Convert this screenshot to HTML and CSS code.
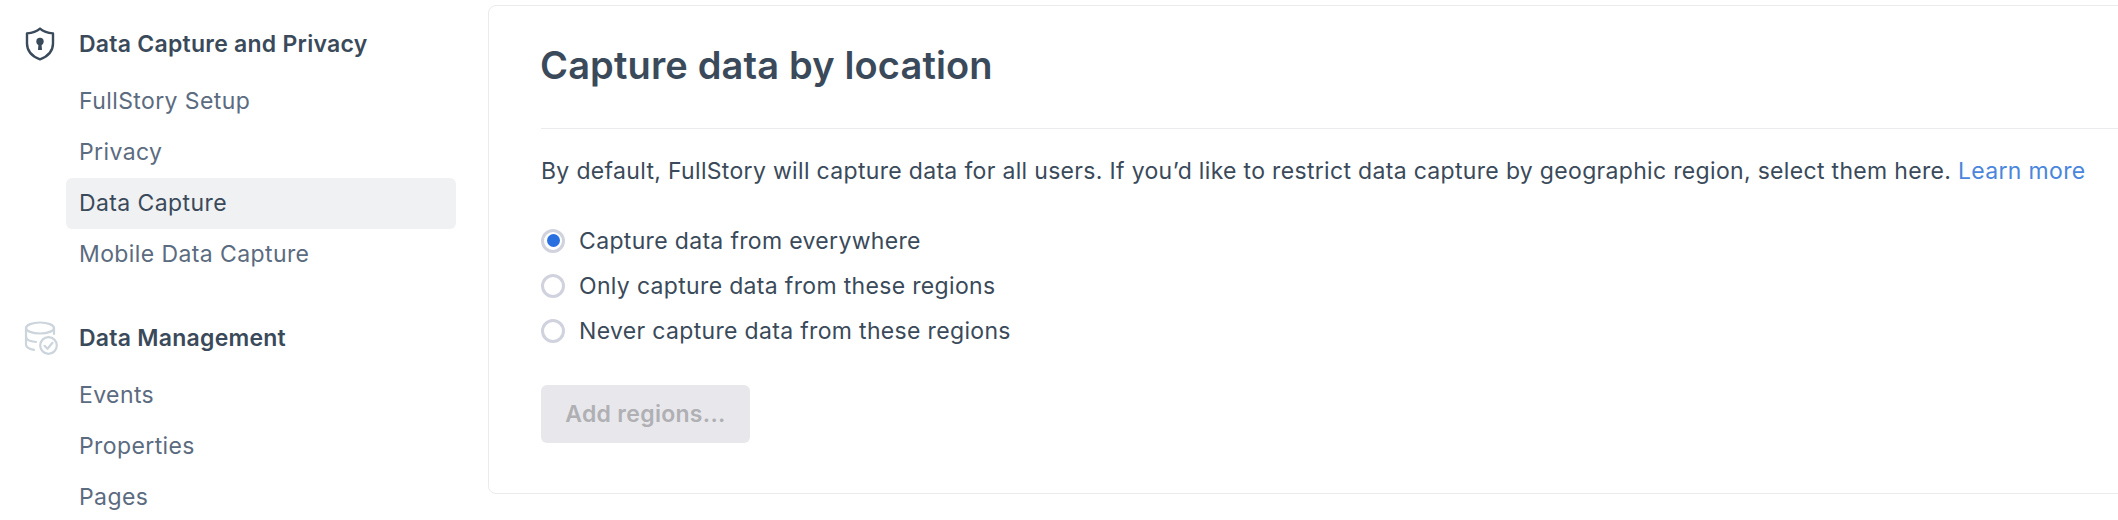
FILE: index.html
```html
<!DOCTYPE html>
<html lang="en">
<head>
<meta charset="utf-8">
<title>Capture data by location</title>
<link rel="stylesheet" href="styles.css">
</head>
<body>
<div class="page">
  <nav class="sidebar">
    <div class="group">
      <div class="group-head">
        <svg class="group-icon" width="30" height="34" viewBox="0 0 30 34" fill="none">
          <path d="M15 1.6 C18.5 4.6 23 6 28 6.4 V16.5 C28 24 22.5 29.5 15 32.4 C7.500 29.500 2 24 2 16.500 V6.400 C7 6 11.500 4.600 15 1.600 Z" stroke="#3a4a5a" stroke-width="2.400" stroke-linejoin="round"/>
          <circle cx="15" cy="14.500" r="3.700" fill="#3a4a5a"/>
          <path d="M13.600 15 H16.400 L17 23 H13 Z" fill="#3a4a5a"/>
        </svg>
        <span class="group-title">Data Capture and Privacy</span>
      </div>
      <a class="item">FullStory Setup</a>
      <a class="item">Privacy</a>
      <a class="item active">Data Capture</a>
      <a class="item">Mobile Data Capture</a>
    </div>
    <div class="group">
      <div class="group-head">
        <svg class="group-icon" width="34" height="34" viewBox="0 0 34 34" fill="none" stroke="#ccd5dc" stroke-width="2.200" stroke-linecap="round" stroke-linejoin="round">
          <ellipse cx="16" cy="7" rx="14" ry="5.500"/>
          <path d="M2 7 V23.500 C2 26 5 28 10 28.800"/>
          <path d="M2 15.500 C2 18.500 6 20.500 12 21"/>
          <path d="M30 7 V13"/>
          <circle cx="24.500" cy="24.500" r="8.300"/>
          <path d="M20.500 24.800 L23.500 27.800 L28.500 21.800"/>
        </svg>
        <span class="group-title">Data Management</span>
      </div>
      <a class="item">Events</a>
      <a class="item">Properties</a>
      <a class="item">Pages</a>
    </div>
  </nav>
  <main class="card">
    <h1 class="title">Capture data by location</h1>
    <div class="body">
      <p class="intro">By default, FullStory will capture data for all users. If you’d like to restrict data capture by geographic region, select them here. <a class="link">Learn more</a></p>
      <div class="options">
        <div class="option"><span class="radio checked"></span><span>Capture data from everywhere</span></div>
        <div class="option"><span class="radio"></span><span>Only capture data from these regions</span></div>
        <div class="option"><span class="radio"></span><span>Never capture data from these regions</span></div>
      </div>
      <button class="btn" disabled>Add regions...</button>
    </div>
  </main>
</div>
</body>
</html>
```
FILE: styles.css
```css
* { box-sizing: border-box; }
html, body { margin: 0; height: 520px; background: #fff; overflow: hidden; }
body { font-family: "Inter", "Noto Sans", sans-serif; font-size: 23px; color: #3a4a5a; }
.page { display: flex; align-items: flex-start; height: 520px; padding-top: 5px; overflow: hidden; }

.sidebar { width: 488px; height: 515px; flex: none; padding: 14px 32px 0 66px; overflow: hidden; }
.group { margin-bottom: 33px; }
.group:last-child { margin-bottom: 0; }
.group-head { display: flex; align-items: center; height: 51px; margin-bottom: 6px; padding: 0 0 2px 13px; position: relative; }
.group-icon { position: absolute; left: -41px; top: 8px; }
.group:last-child .group-icon { left: -42px; top: 8px; }
.group-title { font-weight: 600; letter-spacing: 0.25px; color: #3a4a5a; }
.item { display: flex; align-items: center; height: 51px; padding: 0 0 1px 13px; color: #5b6b80; border-radius: 6px; letter-spacing: 0.4px; }
.item.active { background: #f0f1f3; color: #3a4a5a; }

.card { flex: none; width: 1700px; height: 489px; border: 1.5px solid #e9ebee; border-radius: 8px; }
.title { margin: 0; padding: 0 0 0 51px; height: 118px; display: flex; align-items: center; font-size: 38px; font-weight: 600; letter-spacing: 0.15px; color: #3a4a5a; }
.body { margin-left: 52px; margin-top: 4px; padding: 22px 0 0; border-top: 1.5px solid #e9ebee; }
.intro { margin: 0; line-height: 40px; white-space: nowrap; letter-spacing: 0.32px; }
.link { color: #4a86dc; }
.options { margin-top: 27px; letter-spacing: 0.33px; }
.option { display: flex; align-items: center; height: 45px; gap: 14px; }
.radio { width: 24px; height: 24px; border-radius: 50%; border: 3px solid #d0d2de; background: #fff; flex: none; position: relative; }
.radio.checked::after { content: ""; position: absolute; inset: 2.500px; border-radius: 50%; background: #2a6fe0; }
.btn { display: block; margin-top: 32px; width: 209px; height: 58px; border: 0; border-radius: 6px; background: #e8e8ec; color: #b0b0b4; font: 600 23px "Inter", "Noto Sans", sans-serif; letter-spacing: 0.3px; padding: 0; }
```
